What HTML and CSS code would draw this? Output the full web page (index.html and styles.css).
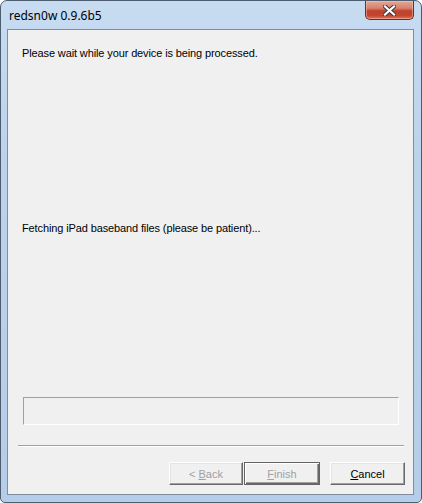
FILE: index.html
```html
<!DOCTYPE html>
<html lang="en">
<head>
    <meta charset="UTF-8">
    <title>redsn0w 0.9.6b5</title>
    <link rel="stylesheet" href="styles.css">
</head>
<body>
    <div class="window">
        <div class="titlebar">
            <span class="title">redsn0w 0.9.6b5</span>
            <div class="close">
                <svg width="13" height="11" viewBox="0 0 13 11">
                    <path d="M2 1.5 L11 9.5 M11 1.5 L2 9.5" stroke="#3a3a44" stroke-width="4.2" stroke-linecap="square"/>
                    <path d="M2 1.5 L11 9.5 M11 1.5 L2 9.5" stroke="#fff" stroke-width="2.2" stroke-linecap="square"/>
                </svg>
            </div>
        </div>
        <div class="client">
            <p class="msg msg-top">Please wait while your device is being processed.</p>
            <p class="msg msg-status">Fetching iPad baseband files (please be patient)...</p>
            <div class="progress"></div>
            <div class="separator"></div>
            <div class="buttons">
                <button class="btn disabled">&lt; <u>B</u>ack</button>
                <button class="btn default disabled"><u>F</u>inish</button>
                <button class="btn cancel"><u>C</u>ancel</button>
            </div>
        </div>
    </div>
</body>
</html>
```

FILE: styles.css
```css
body, html {
    margin: 0;
    padding: 0;
    width: 422px;
    height: 503px;
    overflow: hidden;
    background: #fff;
}
.window {
    box-sizing: border-box;
    width: 422px;
    height: 503px;
    border: 1px solid #4d5d70;
    border-radius: 7px 7px 5px 5px;
    background: linear-gradient(180deg, #c7dcf1 0%, #bcd3ec 30%, #b5cde8 100%);
    padding: 0 7px 7px 6px;
    display: flex;
    flex-direction: column;
}
.titlebar {
    height: 28px;
    display: flex;
    align-items: flex-start;
    flex-shrink: 0;
}
.title {
    font-family: "Noto Sans", "Open Sans", sans-serif;
    font-size: 12px;
    color: #000;
    margin: 6px 0 0 2px;
}
.close {
    margin-left: auto;
    width: 47px;
    height: 18px;
    border: 1px solid #6b2d28;
    border-top: none;
    border-radius: 0 0 5px 5px;
    background: linear-gradient(180deg, #e5a694 0%, #d5826b 40%, #c0412c 55%, #c4452f 80%, #d9745a 100%);
    box-shadow: inset 0 0 0 1px rgba(255, 210, 200, 0.45);
    display: flex;
    align-items: center;
    justify-content: center;
}
.client {
    flex: 1;
    border: 1px solid #7f8d9d;
    background: #f0f0f0;
    display: flex;
    flex-direction: column;
    font-family: "Liberation Sans", Arial, sans-serif;
    font-size: 11px;
    color: #000;
}
.msg {
    margin: 0;
    line-height: 13px;
    padding-left: 14px;
    letter-spacing: -0.12px;
}
.msg-top {
    margin-top: 17px;
}
.msg-status {
    margin-top: 162px;
}
.progress {
    margin: 162px 0 0 15px;
    width: 374px;
    height: 26px;
    border-top: 1px solid #a0a0a0;
    border-left: 1px solid #a0a0a0;
    border-bottom: 1px solid #fff;
    border-right: 1px solid #fff;
}
.separator {
    margin: 20px 0 0 10px;
    width: 386px;
    height: 0;
    border-top: 1px solid #a0a0a0;
    border-bottom: 1px solid #fff;
}
.buttons {
    margin-top: 15px;
    display: flex;
    padding-left: 161px;
}
.btn {
    box-sizing: border-box;
    width: 74px;
    height: 23px;
    padding: 0;
    background: #f0f0f0;
    font-family: "Liberation Sans", Arial, sans-serif;
    font-size: 11px;
    color: #000;
    border: 1px solid;
    border-color: #fff #696969 #696969 #fff;
    box-shadow: inset -1px -1px 0 #a0a0a0, inset 1px 1px 0 #e3e3e3;
}
.btn.disabled {
    color: #a0a0a0;
}
.btn.default {
    margin-left: 1px;
    width: 76px;
    border: 1px solid #646464;
    box-shadow: inset 1px 1px 0 #fff, inset -1px -1px 0 #696969, inset -2px -2px 0 #a0a0a0;
}
.btn.cancel {
    margin-left: 10px;
    width: 75px;
}
```
